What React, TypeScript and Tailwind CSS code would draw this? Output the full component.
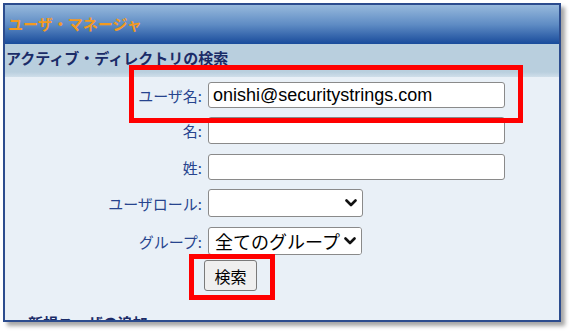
import React from 'react';

const jp = { fontFamily: '"Noto Sans CJK JP", "Noto Sans", sans-serif' };
const mixed = { fontFamily: '"Liberation Sans", "Noto Sans CJK JP", sans-serif' };

function Label({ children }: { children: React.ReactNode }) {
  return (
    <div className="w-[199px] pr-[2px] text-right text-[15px] leading-none text-[#27448e]" style={jp}>
      {children}
    </div>
  );
}

function Chevron() {
  return (
    <svg className="absolute right-[5px] top-1/2 -translate-y-1/2" width="12" height="8" viewBox="0 0 12 8">
      <polyline points="1.5,1.5 6,6 10.5,1.5" fill="none" stroke="#111" strokeWidth="2.6" strokeLinecap="round" strokeLinejoin="round" />
    </svg>
  );
}

export default function App() {
  return (
    <div className="relative h-[331px] w-[569px] overflow-hidden bg-white">
      <div className="ml-[3px] mt-[3px] flex h-[319px] w-[558px] flex-col overflow-hidden border-2 border-[#2c4c8e] bg-[#e9f0f7] shadow-[4px_4px_4px_rgba(0,0,0,0.35)]">
        <div className="flex h-[39px] shrink-0 items-center bg-gradient-to-b from-[#97b9dc] via-[#5f8cc4] to-[#184b9b] pl-[3px]">
          <span className="text-[15px] font-bold text-[#f39a1e]" style={jp}>ユーザ・マネージャ</span>
        </div>
        <div className="flex h-[33px] shrink-0 flex-col bg-[#b9cfde]">
          <div className="flex flex-1 items-center pl-[1px]">
            <span className="text-[15px] font-bold text-[#1b2c68]" style={jp}>アクティブ・ディレクトリの検索</span>
          </div>
          <div className="h-[5px] bg-gradient-to-b from-[#b9cfde] to-[#cfdeea]" />
        </div>

        <div className="flex flex-col pt-[5px]">
          <div className="flex items-center gap-[4px]">
            <Label>ユーザ名:</Label>
            <div className="flex h-[26px] w-[297px] items-center rounded-[3px] border border-[#8a8a8a] bg-white pl-[4px] text-[18px] text-black" style={mixed}>
              onishi@securitystrings.com
            </div>
          </div>
          <div className="mt-[9px] flex items-center gap-[4px]">
            <Label>名:</Label>
            <div className="h-[27px] w-[297px] rounded-[3px] border border-[#8a8a8a] bg-white" />
          </div>
          <div className="mt-[10px] flex items-center gap-[4px]">
            <Label>姓:</Label>
            <div className="h-[26px] w-[297px] rounded-[3px] border border-[#8a8a8a] bg-white" />
          </div>
          <div className="mt-[9px] flex items-center gap-[4px]">
            <Label>ユーザロール:</Label>
            <div className="relative h-[28px] w-[155px] rounded-[3px] border border-[#8a8a8a] bg-white">
              <Chevron />
            </div>
          </div>
          <div className="mt-[10px] flex items-center gap-[4px]">
            <Label>グループ:</Label>
            <div className="relative flex h-[28px] w-[154px] items-center overflow-hidden rounded-[3px] border border-[#8a8a8a] bg-white pl-[6px] text-[18px] text-black" style={jp}>
              <span className="whitespace-nowrap">全てのグループ</span>
              <div className="absolute right-0 top-0 h-full w-[18px] bg-white" />
              <Chevron />
            </div>
          </div>
          <div className="mt-[5px] pl-[199px]">
            <div className="flex h-[31px] w-[53px] items-center justify-center rounded-[3px] border border-[#7a7a7a] bg-[#efefef] text-[16px] text-black" style={jp}>
              検索
            </div>
          </div>
          <div className="mt-[24px] pl-[23px] text-[15px] font-bold leading-none text-[#1b2c68]" style={jp}>
            新規ユーザの追加
          </div>
        </div>
      </div>

      <div className="absolute left-[129px] top-[65px] h-[58px] w-[394px] border-[5px] border-[#ff0000]" />
      <div className="absolute left-[189px] top-[254px] h-[46px] w-[86px] border-[5px] border-[#ff0000]" />
    </div>
  );
}
